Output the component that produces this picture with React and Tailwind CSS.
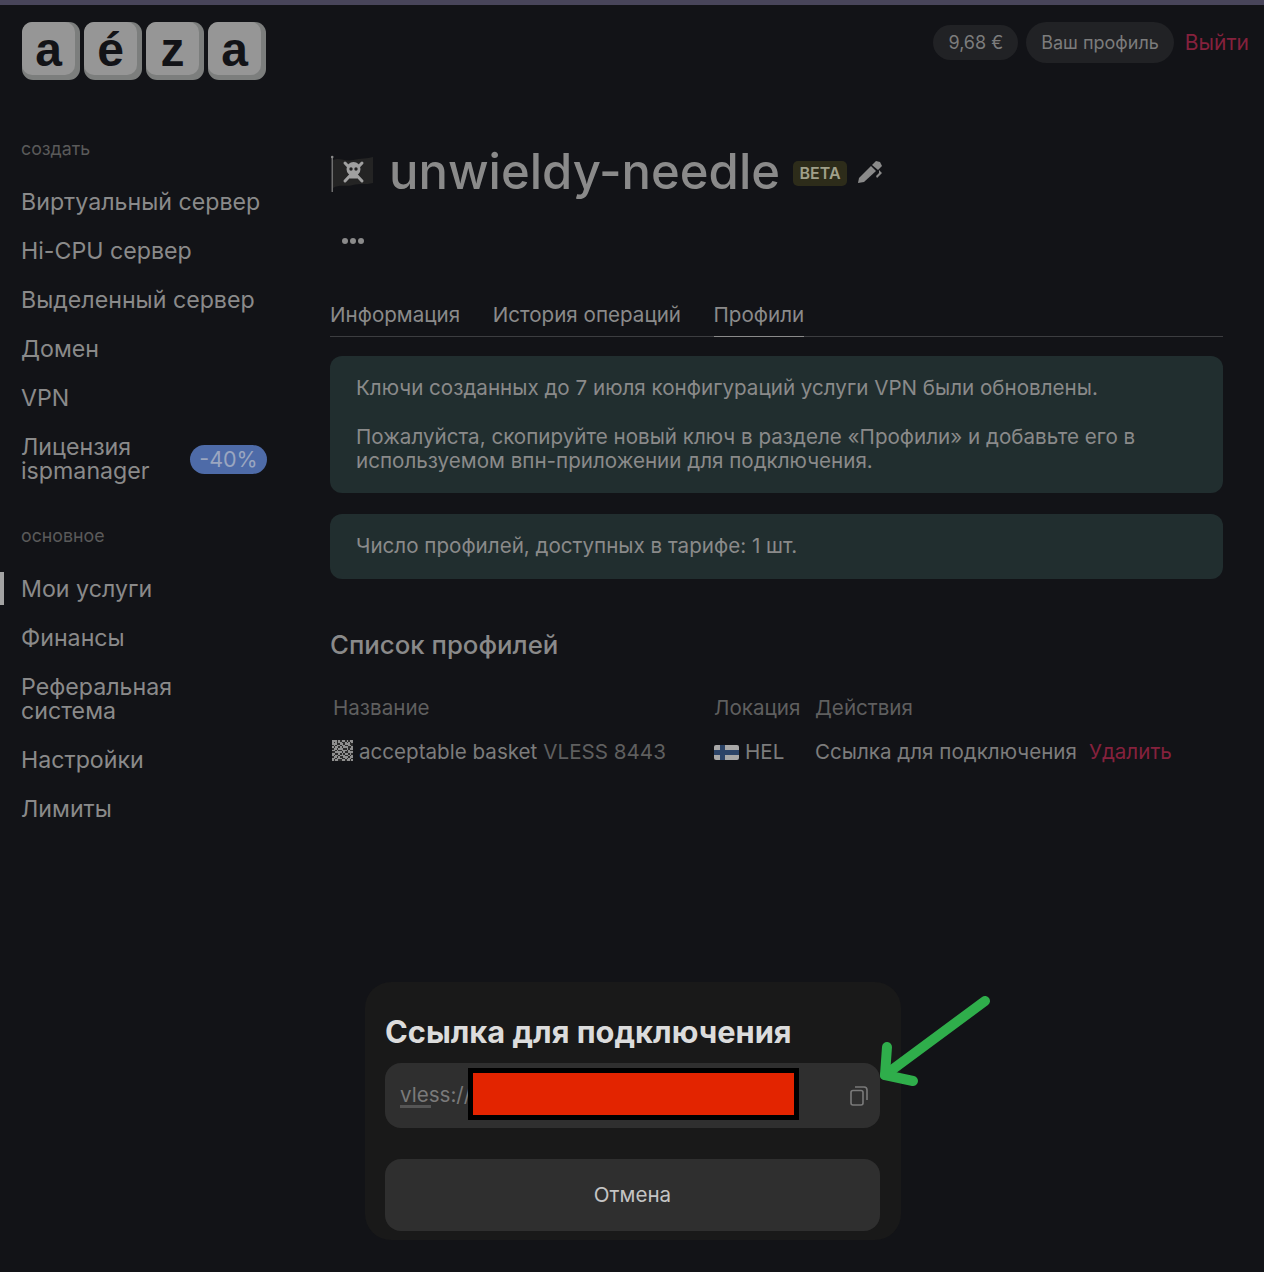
import React from 'react';

const LOGO_KEYS = ['a', 'é', 'z', 'a'];

const CREATE_ITEMS = ['Виртуальный сервер', 'Hi-CPU сервер', 'Выделенный сервер', 'Домен', 'VPN'];
const MAIN_ITEMS = ['Финансы', 'Реферальная система', 'Настройки', 'Лимиты'];

const QR_CELLS = [
  '1110101101011',
  '1010110010101',
  '1110011011100',
  '0101101100110',
  '1011010111001',
  '0110111001011',
  '1101001110100',
  '0011110100111',
  '1100101011010',
  '1011011100101',
  '0110100111011',
  '1101110010110',
  '1011001101101',
];

const SideItem = ({ children }) => (
  <a className="block w-[242px] text-[23.2px] leading-[24px] text-[#8a8a8a]">{children}</a>
);

const PirateFlag = () => (
  <svg width="44" height="40" viewBox="0 0 44 40" className="shrink-0">
    <rect x="1.5" y="5" width="1.5" height="35" fill="#6f6f6f" />
    <circle cx="2.2" cy="5" r="1.3" fill="#8a8a8a" />
    <path d="M3 8 C10 5 15 10 23 8 C31 6 37 7 43 5 L43 31 C36 33 30 31 23 33 C15 35 9 32 3 36 Z" fill="#242424" />
    <g stroke="#a0a0a0" strokeWidth="3" strokeLinecap="round">
      <path d="M15 11 L32 29" />
      <path d="M32 11 L15 29" />
    </g>
    <circle cx="23.5" cy="17" r="7" fill="#a0a0a0" />
    <rect x="19.5" y="21" width="8" height="5.5" fill="#a0a0a0" />
    <circle cx="21" cy="17" r="1.7" fill="#242424" />
    <circle cx="26" cy="17" r="1.7" fill="#242424" />
  </svg>
);

const QrIcon = () => (
  <svg width="21" height="21" viewBox="0 0 13 13" className="shrink-0 -mt-[3px]" shapeRendering="crispEdges">
    <rect width="13" height="13" fill="#8f8f8f" />
    {QR_CELLS.map((row, y) =>
      row.split('').map((cell, x) => (cell === '0' ? <rect key={`${x}-${y}`} x={x} y={y} width="1" height="1" fill="#2c2c2c" /> : null))
    )}
  </svg>
);

const FinlandFlag = () => (
  <svg width="25" height="15" viewBox="0 0 25 15" className="shrink-0">
    <rect width="25" height="15" rx="2" fill="#a8a8a8" />
    <rect x="6" width="5" height="15" fill="#2c4468" />
    <rect y="5" width="25" height="5" fill="#2c4468" />
  </svg>
);

const App = () => {
  return (
    <div className="relative w-[1264px] h-[1272px] overflow-hidden bg-[#121317] font-['Inter',sans-serif] text-[#8a8a8a]">
      <div className="h-[5px] bg-[#48455a]" />

      <header className="flex justify-between items-start pl-[22px] pr-[15px] pt-[17px]">
        <div className="flex gap-[4px]">
          {LOGO_KEYS.map((key, i) => (
            <div
              key={i}
              className="w-[58px] h-[58px] rounded-[11px] bg-[#7c7e7d] font-['Liberation_Sans',sans-serif] font-bold text-[48px] leading-[56px] text-[#121317]"
            >
              <div className="w-[53px] h-[53px] rounded-[10px] bg-[#969696] text-center">{key}</div>
            </div>
          ))}
        </div>
        <div className="flex items-center text-[18px]">
          <span className="h-[35px] px-[15px] rounded-full bg-[#212225] flex items-center text-[#7c7c7c]">9,68 €</span>
          <span className="ml-[8px] h-[41px] px-[15px] rounded-full bg-[#212225] flex items-center text-[#7c7c7c]">Ваш профиль</span>
          <span className="ml-[11px] text-[21px] text-[#85213d]">Выйти</span>
        </div>
      </header>

      <div className="flex">
        <aside className="w-[330px] shrink-0 pl-[21px] pt-[57px]">
          <div className="text-[17.8px] leading-[24px] text-[#5a5a5a]">создать</div>
          <nav className="mt-[29px] flex flex-col gap-[25px]">
            {CREATE_ITEMS.map((item) => (
              <SideItem key={item}>{item}</SideItem>
            ))}
            <div className="flex items-center w-[246px] justify-between">
              <span className="w-[140px] text-[23.2px] leading-[24px]">Лицензия ispmanager</span>
              <span className="h-[29px] w-[77px] justify-center rounded-full bg-[#4e6ba8] flex items-center text-[21.5px] text-[#9aa6c0]">-40%</span>
            </div>
          </nav>
          <div className="mt-[41px] text-[17.8px] leading-[24px] text-[#5a5a5a]">основное</div>
          <nav className="mt-[29px] flex flex-col gap-[25px]">
            <div className="relative">
              <span className="absolute left-[-21px] top-[-5px] w-[4px] h-[33px] bg-[#a3a3a3]" />
              <SideItem>Мои услуги</SideItem>
            </div>
            {MAIN_ITEMS.map((item) => (
              <SideItem key={item}>{item}</SideItem>
            ))}
          </nav>
        </aside>

        <main className="w-[893px] pt-[63px]">
          <div className="flex items-center h-[58px]">
            <PirateFlag />
            <h1 className="ml-[15px] text-[49px] leading-[58px] font-medium text-[#8a8a8a]">unwieldy-needle</h1>
            <span className="ml-[13px] mt-[2px] w-[54px] justify-center h-[25px] rounded-[5px] bg-[#2d2c1a] flex items-center text-[16px] font-semibold text-[#a0a08a]">BETA</span>
            <svg width="26" height="26" viewBox="0 0 26 26" className="ml-[10px]" fill="#8a8a8a">
              <path d="M1 24 L2 19 L14 7 L19 12 L7 23 Z" />
              <path d="M15 6 L19 2 L23 3 L25 7 L21 11 Z" />
              <path d="M22 11 L25 14 L20 19 L19 17 L22 14 Z" />
            </svg>
          </div>
          <div className="mt-[37px] ml-[12px] flex gap-[2px] h-[6px]">
            <span className="w-[6px] h-[6px] rounded-full bg-[#8a8a8a]" />
            <span className="w-[6px] h-[6px] rounded-full bg-[#8a8a8a]" />
            <span className="w-[6px] h-[6px] rounded-full bg-[#8a8a8a]" />
          </div>

          <div className="mt-[50px] flex gap-[32.5px] border-b border-[#3c3d40] h-[43px] text-[20.6px] leading-[28px]">
            <span className="pt-[7px]">Информация</span>
            <span className="pt-[7px]">История операций</span>
            <span className="pt-[7px] h-[43px] border-b border-[#8a8a8a]">Профили</span>
          </div>

          <div className="mt-[19px] rounded-[12px] bg-[#212e2f] px-[26px] pt-[20px] pb-[20px] text-[20.6px] leading-[24px]">
            <p>Ключи созданных до 7 июля конфигураций услуги VPN были обновлены.</p>
            <p className="mt-[25px]">Пожалуйста, скопируйте новый ключ в разделе «Профили» и добавьте его в используемом впн-приложении для подключения.</p>
          </div>

          <div className="mt-[21px] rounded-[12px] bg-[#212e2f] px-[26px] pt-[20px] pb-[21px] text-[20.6px] leading-[24px]">
            Число профилей, доступных в тарифе: 1 шт.
          </div>

          <h2 className="mt-[50px] text-[25.8px] leading-[32px] font-medium text-[#8a8a8a]">Список профилей</h2>

          <div className="mt-[35px] grid grid-cols-[384px_101px_1fr] text-[20.6px] leading-[24px]">
            <div className="pl-[3px] text-[#5f5f5f]">Название</div>
            <div className="text-[#5f5f5f]">Локация</div>
            <div className="text-[#5f5f5f]">Действия</div>
            <div className="mt-[20px] pl-[2px] flex items-center gap-[6px]">
              <QrIcon />
              <span className="text-[#7c7c7c]">acceptable basket</span>
              <span className="text-[#5f5f5f]">VLESS 8443</span>
            </div>
            <div className="mt-[20px] flex items-center gap-[6px] text-[#7c7c7c]">
              <FinlandFlag />
              HEL
            </div>
            <div className="mt-[20px] flex gap-[12px] text-[#7c7c7c]">
              <span>Ссылка для подключения</span>
              <span className="text-[#85213d]">Удалить</span>
            </div>
          </div>
        </main>
      </div>

      {/* modal over the page */}
      <div className="absolute left-[365px] top-[982px] w-[536px] h-[258px] rounded-[26px] bg-[#191919] px-[20px] pt-[32px]">
        <h3 className="text-[30.8px] leading-[36px] font-bold text-[#dcdcdc]">Ссылка для подключения</h3>
        <div className="relative mt-[13px] h-[65px] w-[495px] rounded-[16px] bg-[#2f2f2f] flex items-center pl-[15px] text-[20.6px] text-[#7a7a7a]">
          <span className="relative">
            vless://
            <span className="absolute left-0 top-[25px] w-[31px] h-[3px] bg-[#555]" />
          </span>
          <div className="absolute left-[83px] top-[5px] w-[331px] h-[52px] border-[5px] border-black bg-[#e32400]" />
          <svg width="18" height="20" viewBox="0 0 18 20" className="absolute right-[12px] top-[23px]" fill="none" stroke="#7a7a7a" strokeWidth="1.6">
            <rect x="1" y="4.5" width="12" height="14.5" rx="2" />
            <path d="M5 1 H14 Q17 1 17 4 V14" />
          </svg>
        </div>
        <button className="mt-[31px] w-[495px] h-[72px] rounded-[16px] bg-[#2f2f2f] text-[20.6px] text-[#c4c4c4]">Отмена</button>
      </div>

      <svg width="120" height="100" viewBox="0 0 120 100" className="absolute left-[876px] top-[992px]" fill="none" stroke="#2fae4b" strokeWidth="10" strokeLinecap="round" strokeLinejoin="round">
        <path d="M109 9 L9 83" />
        <path d="M11 55 L9 83 L37 89" />
      </svg>
    </div>
  );
};

export default App;
